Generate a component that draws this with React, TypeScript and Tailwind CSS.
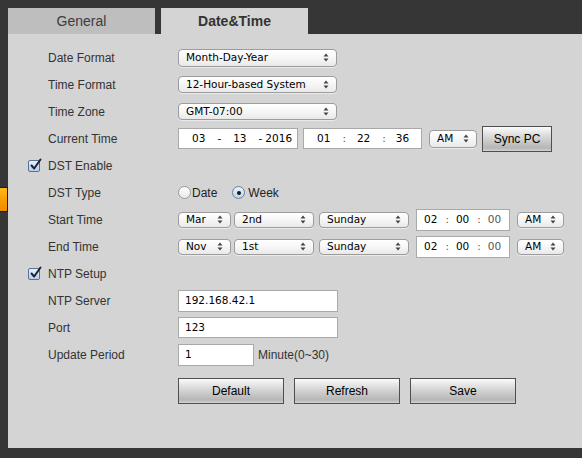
import React from "react";

const ctl = "font-['DejaVu_Sans',sans-serif] text-[10.5px] text-black";

function Arrows() {
  return (
    <svg width="6" height="9" viewBox="0 0 6 9" className="shrink-0">
      <path d="M3 0.5 L5.5 3.5 L0.5 3.5 Z" fill="#444" />
      <path d="M3 8.5 L5.5 5.5 L0.5 5.5 Z" fill="#444" />
    </svg>
  );
}

function Select({ text, w, h = "h-[18px]" }: { text: string; w: string; h?: string }) {
  return (
    <div
      className={`${w} ${h} ${ctl} flex items-center justify-between rounded-[4px] border border-[#9c9c9c] bg-[linear-gradient(to_bottom,#ffffff,#f6f6f6_50%,#e9e9e9)] pl-[7px] pr-[7px] shadow-[0_1px_0_rgba(255,255,255,0.5)]`}
    >
      <span className="leading-none">{text}</span>
      <Arrows />
    </div>
  );
}

function Btn({ text, w, h = "h-[26px]" }: { text: string; w: string; h?: string }) {
  return (
    <div
      className={`${w} ${h} flex items-center justify-center border border-[#4f4f4f] bg-[linear-gradient(to_bottom,#fbfbfb,#dcdcdc_35%,#c2c2c2_70%,#b6b6b6_88%,#d4d4d4)] font-['Liberation_Sans',sans-serif] text-[12px] text-black`}
    >
      {text}
    </div>
  );
}

function Check() {
  return (
    <div className="relative h-[12px] w-[12px] rounded-[2px] border border-[#5b6f91] bg-[linear-gradient(to_bottom,#e6f0fb,#b5d0ee)]">
      <svg width="14" height="14" viewBox="0 0 14 14" className="absolute left-[0px] top-[-3px]">
        <path d="M2.5 7.5 L5.2 10.5 L11.5 1.5" stroke="#1b2330" strokeWidth="2" fill="none" strokeLinecap="round" strokeLinejoin="round" />
      </svg>
    </div>
  );
}

function Radio({ on }: { on?: boolean }) {
  return (
    <div
      className={`flex h-[13px] w-[13px] items-center justify-center rounded-full border ${
        on
          ? "border-[#6a7fa0] bg-[linear-gradient(to_bottom,#eaf2fc,#bcd3ef)]"
          : "border-[#9a9a9a] bg-[linear-gradient(to_bottom,#ffffff,#e8e8e8)]"
      }`}
    >
      {on && <div className="h-[4px] w-[4px] rounded-full bg-[#1a1a1a]" />}
    </div>
  );
}

function Row({ label, check, children }: { label: string; check?: boolean; children?: React.ReactNode }) {
  return (
    <div className="flex h-[27px] items-center">
      <div className="flex w-[20px] items-center">{check && <Check />}</div>
      <div className="w-[130px] font-['Liberation_Sans',sans-serif] text-[12px] text-[#333]">{label}</div>
      <div className="flex items-center">{children}</div>
    </div>
  );
}

const inputBox = "flex items-center border border-[#a9a9a9] bg-white";

export default function App() {
  return (
    <div className="flex h-[458px] w-[582px] flex-col overflow-hidden bg-[#363636]">
      {/* tabs */}
      <div className="flex gap-[6px] pl-[8px] pt-[8px]">
        <div className="flex h-[26px] w-[147px] items-center justify-center bg-[#bebebe] font-['Liberation_Sans',sans-serif] text-[14px] text-[#3c3c3c]">
          General
        </div>
        <div className="flex h-[26px] w-[147px] items-center justify-center bg-[#d4d4d4] font-['Liberation_Sans',sans-serif] text-[14px] font-bold text-[#333]">
          Date&amp;Time
        </div>
      </div>
      <div className="flex h-[414px]">
        {/* left strip */}
        <div className="w-[8px] pt-[153px]">
          <div className="h-[25px] w-[8px] border-y border-r border-[#1e1e1e] bg-[linear-gradient(to_bottom,#ffba1a,#f59a00_60%,#ef8a00)]" />
        </div>
        {/* panel */}
        <div className="flex-1 bg-[#d4d4d4] pl-[20px] pt-[10px]">
          <Row label="Date Format">
            <Select text="Month-Day-Year" w="w-[159px]" />
          </Row>
          <Row label="Time Format">
            <Select text="12-Hour-based System" w="w-[159px]" h="h-[17px]" />
          </Row>
          <Row label="Time Zone">
            <Select text="GMT-07:00" w="w-[159px]" h="h-[17px]" />
          </Row>
          <Row label="Current Time">
            <div className={`${inputBox} ${ctl} h-[21px] w-[120px] pl-[13px]`}>
              <span>03</span>
              <span className="ml-[12px]">-</span>
              <span className="ml-[12px]">13</span>
              <span className="ml-[12px]">-</span>
              <span className="ml-[3px]">2016</span>
            </div>
            <div className={`${inputBox} ${ctl} ml-[5px] h-[21px] w-[119px] pl-[13px]`}>
              <span>01</span>
              <span className="ml-[12px] text-[#555]">:</span>
              <span className="ml-[11px]">22</span>
              <span className="ml-[12px] text-[#555]">:</span>
              <span className="ml-[10px]">36</span>
            </div>
            <div className="ml-[7px]">
              <Select text="AM" w="w-[48px]" />
            </div>
            <div className="ml-[5px]">
              <Btn text="Sync PC" w="w-[70px]" />
            </div>
          </Row>
          <Row label="DST Enable" check />
          <Row label="DST Type">
            <div className="flex items-center font-['Liberation_Sans',sans-serif] text-[12px] text-[#222]">
              <Radio />
              <span className="ml-[1px]">Date</span>
              <div className="ml-[15px]">
                <Radio on />
              </div>
              <span className="ml-[3px]">Week</span>
            </div>
          </Row>
          <Row label="Start Time">
            <Select text="Mar" w="w-[53px]" h="h-[16px]" />
            <div className="ml-[3px]">
              <Select text="2nd" w="w-[80px]" h="h-[16px]" />
            </div>
            <div className="ml-[5px]">
              <Select text="Sunday" w="w-[90px]" h="h-[16px]" />
            </div>
            <div className={`${inputBox} ${ctl} ml-[7px] h-[22px] w-[94px] pl-[7px]`}>
              <span>02</span>
              <span className="ml-[8px] text-[#555]">:</span>
              <span className="ml-[7px]">00</span>
              <span className="ml-[8px] text-[#555]">:</span>
              <span className="ml-[7px] text-[#555]">00</span>
            </div>
            <div className="ml-[7px]">
              <Select text="AM" w="w-[47px]" h="h-[16px]" />
            </div>
          </Row>
          <Row label="End Time">
            <Select text="Nov" w="w-[53px]" h="h-[16px]" />
            <div className="ml-[3px]">
              <Select text="1st" w="w-[80px]" h="h-[16px]" />
            </div>
            <div className="ml-[5px]">
              <Select text="Sunday" w="w-[90px]" h="h-[16px]" />
            </div>
            <div className={`${inputBox} ${ctl} ml-[7px] h-[22px] w-[94px] pl-[7px]`}>
              <span>02</span>
              <span className="ml-[8px] text-[#555]">:</span>
              <span className="ml-[7px]">00</span>
              <span className="ml-[8px] text-[#555]">:</span>
              <span className="ml-[7px] text-[#555]">00</span>
            </div>
            <div className="ml-[7px]">
              <Select text="AM" w="w-[47px]" h="h-[16px]" />
            </div>
          </Row>
          <Row label="NTP Setup" check />
          <Row label="NTP Server">
            <div className={`${inputBox} ${ctl} h-[22px] w-[160px] pl-[6px]`}>192.168.42.1</div>
          </Row>
          <Row label="Port">
            <div className={`${inputBox} ${ctl} h-[21px] w-[160px] pl-[6px]`}>123</div>
          </Row>
          <Row label="Update Period">
            <div className={`${inputBox} ${ctl} h-[22px] w-[76px] pl-[6px]`}>1</div>
            <span className="ml-[4px] font-['Liberation_Sans',sans-serif] text-[12px] text-[#333]">Minute(0~30)</span>
          </Row>
          <div className="mt-[10px] flex gap-[10px] pl-[150px]">
            <Btn text="Default" w="w-[106px]" />
            <Btn text="Refresh" w="w-[106px]" />
            <Btn text="Save" w="w-[106px]" />
          </div>
        </div>
      </div>
    </div>
  );
}
